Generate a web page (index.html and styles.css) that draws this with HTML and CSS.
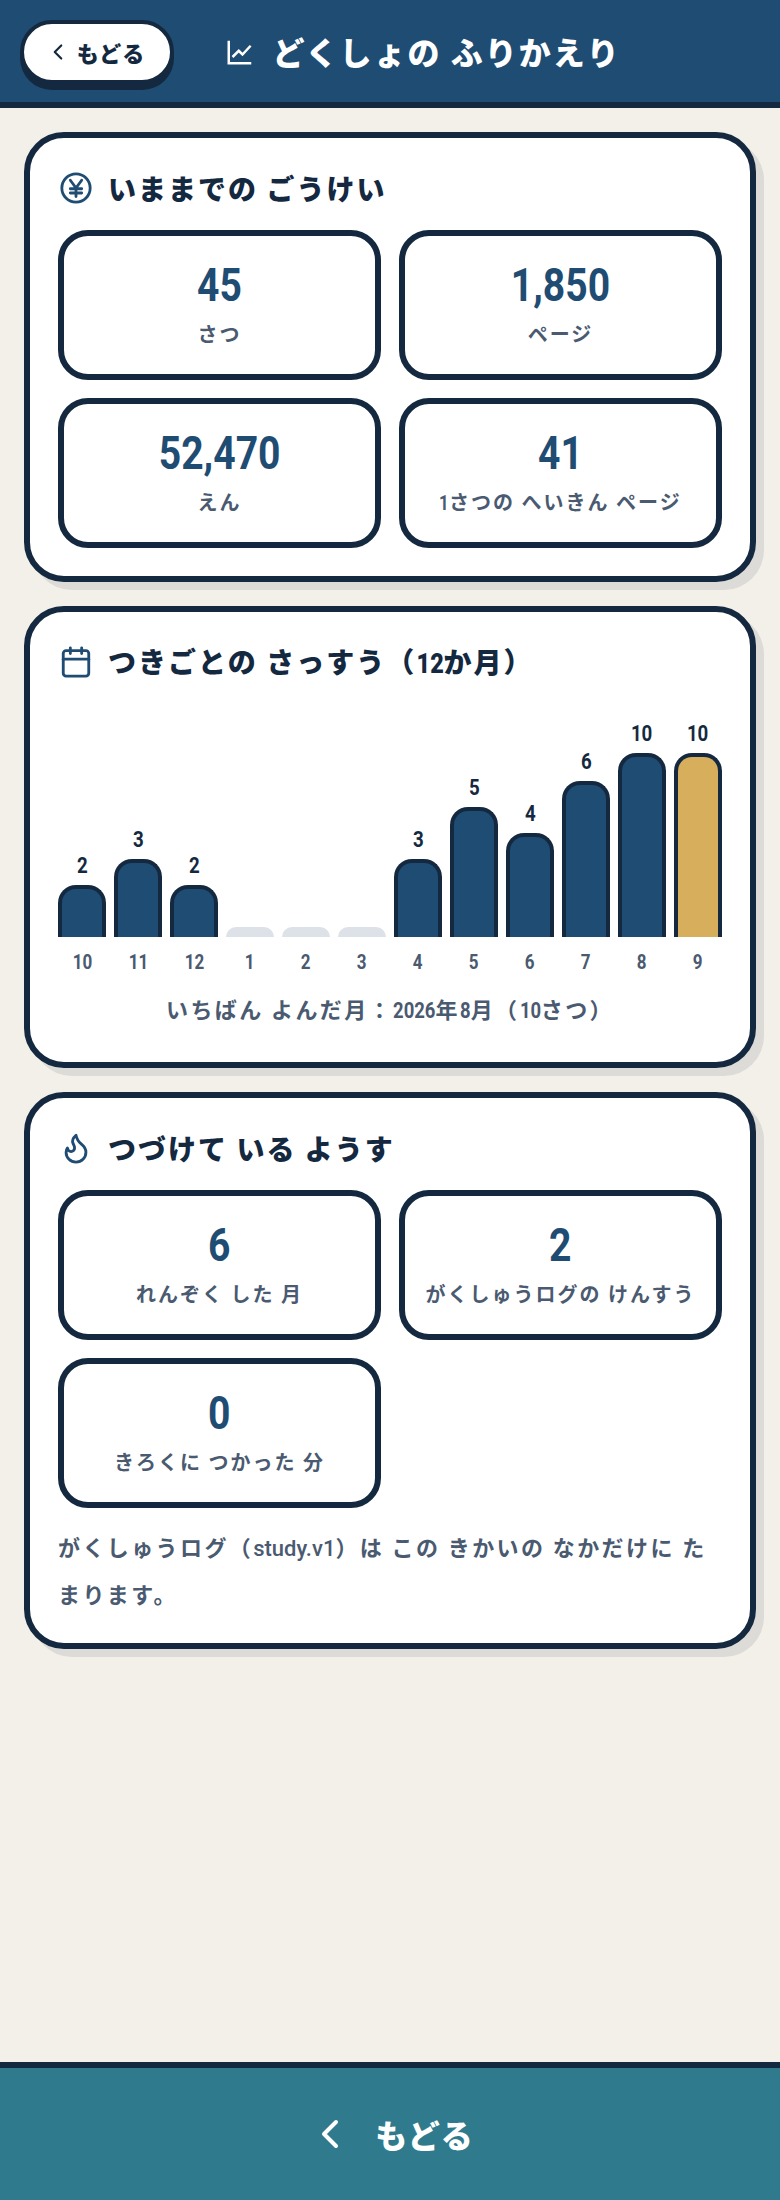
FILE: index.html
```html
<!DOCTYPE html>
<html lang="ja">
<head>
<meta charset="utf-8">
<title>どくしょの ふりかえり</title>
<link rel="stylesheet" href="styles.css">
</head>
<body>
<header class="topbar">
  <a class="back-pill">
    <svg class="chev-s" viewBox="0 0 24 24"><path d="m15 18-6-6 6-6"/></svg>
    <span>もどる</span>
  </a>
  <svg class="top-icon" viewBox="0 0 24 24"><path d="M3 3v18h18"/><path d="m6 16 5-5 3 3 6.500-7"/></svg>
  <h1 class="top-title">どくしょの ふりかえり</h1>
</header>
<main class="content">
  <section class="card">
    <h2 class="card-title">
      <svg class="ic" viewBox="0 0 24 24"><circle cx="12" cy="12" r="10"/><path d="m8 6.500 4 5.500 4-5.500M12 12v6M8 12.500h8M8 15.500h8"/></svg>
      <span>いままでの ごうけい</span>
    </h2>
    <div class="tiles">
      <div class="tile"><div class="num"><span class="cn">45</span></div><div class="lab">さつ</div></div>
      <div class="tile"><div class="num"><span class="cn">1,850</span></div><div class="lab">ページ</div></div>
      <div class="tile"><div class="num"><span class="cn">52,470</span></div><div class="lab">えん</div></div>
      <div class="tile"><div class="num"><span class="cn">41</span></div><div class="lab"><span class="in c1">1</span>さつの へいきん ページ</div></div>
    </div>
  </section>
  <section class="card">
    <h2 class="card-title">
      <svg class="ic" viewBox="0 0 24 24"><path d="M8 2v4M16 2v4"/><rect x="3" y="4" width="18" height="18" rx="2"/><path d="M3 10h18"/></svg>
      <span>つきごとの さっすう（<span class="in c2">12</span>か月）</span>
    </h2>
    <div class="chart">
      <div class="col"><span class="val"><span class="cn">2</span></span><div class="bar" style="height:52px"></div><span class="mon"><span class="cn">10</span></span></div>
      <div class="col"><span class="val"><span class="cn">3</span></span><div class="bar" style="height:78px"></div><span class="mon"><span class="cn">11</span></span></div>
      <div class="col"><span class="val"><span class="cn">2</span></span><div class="bar" style="height:52px"></div><span class="mon"><span class="cn">12</span></span></div>
      <div class="col"><div class="bar empty"></div><span class="mon"><span class="cn">1</span></span></div>
      <div class="col"><div class="bar empty"></div><span class="mon"><span class="cn">2</span></span></div>
      <div class="col"><div class="bar empty"></div><span class="mon"><span class="cn">3</span></span></div>
      <div class="col"><span class="val"><span class="cn">3</span></span><div class="bar" style="height:78px"></div><span class="mon"><span class="cn">4</span></span></div>
      <div class="col"><span class="val"><span class="cn">5</span></span><div class="bar" style="height:130px"></div><span class="mon"><span class="cn">5</span></span></div>
      <div class="col"><span class="val"><span class="cn">4</span></span><div class="bar" style="height:104px"></div><span class="mon"><span class="cn">6</span></span></div>
      <div class="col"><span class="val"><span class="cn">6</span></span><div class="bar" style="height:156px"></div><span class="mon"><span class="cn">7</span></span></div>
      <div class="col"><span class="val"><span class="cn">10</span></span><div class="bar" style="height:184px"></div><span class="mon"><span class="cn">8</span></span></div>
      <div class="col"><span class="val"><span class="cn">10</span></span><div class="bar gold" style="height:184px"></div><span class="mon"><span class="cn">9</span></span></div>
    </div>
    <p class="caption">いちばん よんだ月：<span class="in c4">2026</span>年<span class="in c1">8</span>月（<span class="in c2">10</span>さつ）</p>
  </section>
  <section class="card">
    <h2 class="card-title">
      <svg class="ic" viewBox="0 0 24 24"><path d="M8.500 14.500A2.500 2.500 0 0 0 11 12c0-1.380-.5-2-1-3-1.072-2.143-.224-4.054 2-6 .5 2.500 2 4.900 4 6.500 2 1.600 3 3.500 3 5.500a7 7 0 1 1-14 0c0-1.153.433-2.294 1-3a2.500 2.500 0 0 0 2.500 2.500z"/></svg>
      <span>つづけて いる ようす</span>
    </h2>
    <div class="tiles">
      <div class="tile"><div class="num"><span class="cn">6</span></div><div class="lab">れんぞく した 月</div></div>
      <div class="tile"><div class="num"><span class="cn">2</span></div><div class="lab">がくしゅうログの けんすう</div></div>
      <div class="tile"><div class="num"><span class="cn">0</span></div><div class="lab">きろくに つかった 分</div></div>
    </div>
    <p class="note">がくしゅうログ（<span class="latin">study.v1</span>）は この きかいの なかだけに たまります。</p>
  </section>
</main>
<footer class="bottom">
  <svg class="chev-l" viewBox="0 0 24 24"><path d="m15 18-6-6 6-6"/></svg>
  <span>もどる</span>
</footer>
</body>
</html>
```
FILE: styles.css
```css
* { box-sizing: border-box; }
html, body { margin: 0; padding: 0; }
body {
  min-height: 2200px;
  display: flex;
  flex-direction: column;
  background: #f3f0e9;
  color: #14293f;
  font-family: "Noto Sans CJK JP", sans-serif;
  font-weight: 700;
}
.cn {
  display: inline-block;
  font-family: Roboto, "Noto Sans CJK JP", sans-serif;
  letter-spacing: 0;
  transform: scaleX(0.85);
}
.in {
  display: inline-block;
  font-family: Roboto, "Noto Sans CJK JP", sans-serif;
  letter-spacing: 0;
  transform: scaleX(0.84);
}
.c1 { margin: 0 -0.045em; }
.c2 { margin: 0 -0.09em; }
.c4 { margin: 0 -0.18em; }
.latin { font-family: Roboto, "Noto Sans CJK JP", sans-serif; letter-spacing: 0; font-weight: 500; }
.topbar {
  height: 108px;
  background: #1f4c73;
  border-bottom: 6px solid #14293f;
  display: flex;
  align-items: flex-start;
  padding: 20px 20px 0;
  flex: none;
}
.back-pill {
  width: 154px;
  height: 64px;
  background: #fff;
  border: 4px solid #14293f;
  border-radius: 32px;
  box-shadow: 0 6px 0 #14293f;
  display: flex;
  align-items: center;
  justify-content: center;
  gap: 6px;
  padding-right: 4px;
  font-size: 22px;
  line-height: 1;
  letter-spacing: 1px;
  font-weight: 900;
  flex: none;
}
.chev-s { width: 26px; height: 26px; fill: none; stroke: #14293f; stroke-width: 2; stroke-linecap: round; stroke-linejoin: round; }
.top-icon { width: 30px; height: 30px; margin: 16.5px 0 0 50.5px; fill: none; stroke: #fff; stroke-width: 2; flex: none; }
.top-title {
  margin: 11px 0 0 18px;
  font-size: 32px;
  line-height: 40px;
  color: #fff;
  letter-spacing: 2px;
  font-weight: 900;
}
.content {
  flex: 1;
  padding: 24px 24px 0;
  display: flex;
  flex-direction: column;
  gap: 24px;
}
.card {
  background: #fff;
  border: 6px solid #14293f;
  border-radius: 40px;
  box-shadow: 8px 8px 0 rgba(20, 41, 63, 0.1);
  padding: 28px;
}
.card-title {
  display: flex;
  align-items: center;
  gap: 15px;
  margin: 0 0 20px;
  height: 44px;
  font-size: 28px;
  line-height: 44px;
  letter-spacing: 2px;
  font-weight: 900;
}
.ic { width: 34px; height: 34px; margin-left: 1px; flex: none; fill: none; stroke: #1f4c73; stroke-width: 2; stroke-linecap: round; stroke-linejoin: round; }
.tiles { display: grid; grid-template-columns: 1fr 1fr; gap: 18px; }
.tile {
  height: 150px;
  border: 6px solid #14293f;
  border-radius: 30px;
  display: flex;
  flex-direction: column;
  align-items: center;
  padding-top: 16px;
}
.num { font-size: 46px; line-height: 58px; color: #1f4c73; font-weight: 700; }
.lab { font-size: 20px; line-height: 28px; color: #4a5a70; letter-spacing: 2px; margin-top: 6px; white-space: nowrap; }
.chart {
  display: grid;
  grid-template-columns: repeat(12, 48px);
  column-gap: 8px;
  height: 271px;
  align-items: end;
}
.col { display: flex; flex-direction: column; align-items: center; justify-content: flex-end; }
.val { font-size: 22px; line-height: 26px; margin-bottom: 6px; }
.bar {
  width: 48px;
  background: #1f4c73;
  border: 4px solid #14293f;
  border-bottom: 0;
  border-radius: 18px 18px 0 0;
}
.bar.gold { background: #d6ae5c; }
.bar.empty { height: 10px; background: #dde1e8; border: 0; border-radius: 10px 10px 0 0; }
.mon { font-size: 20px; line-height: 26px; margin-top: 11px; color: #4a5a70; font-weight: 700; }
.caption { margin: 16px 0 6px; text-align: center; font-size: 22px; line-height: 34px; color: #4a5a70; letter-spacing: 2.4px; font-weight: 700; }
.note { margin: 16px 0 0; font-size: 22px; line-height: 44px; color: #4a5a70; letter-spacing: 2.4px; font-weight: 700; }
.bottom {
  height: 138px;
  flex: none;
  background: #2f7b8d;
  border-top: 6px solid #14293f;
  color: #fff;
  display: flex;
  align-items: center;
  justify-content: center;
  gap: 21px;
  font-size: 32px;
  line-height: 1;
  letter-spacing: 1px;
  font-weight: 900;
}
.chev-l { width: 48px; height: 48px; fill: none; stroke: #fff; stroke-width: 2; stroke-linecap: round; stroke-linejoin: round; }
```
